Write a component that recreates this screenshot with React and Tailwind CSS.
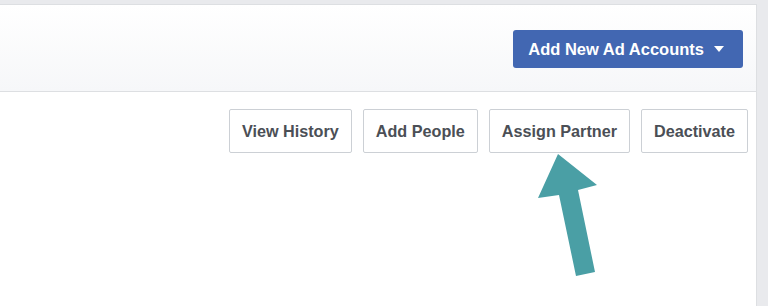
import React from 'react';

const actions = ['View History', 'Add People', 'Assign Partner', 'Deactivate'];

const App = () => {
  return (
    <div
      className="relative h-[306px] w-[768px] overflow-hidden bg-[#e9eaed] pt-[4px] pr-[11px]"
      style={{ fontFamily: '"Liberation Sans", Arial, sans-serif' }}
    >
      <div className="h-full border-t border-r border-[#dddfe2] bg-white">
        <div className="flex h-[87px] items-start justify-end border-b border-[#dddfe2] bg-gradient-to-b from-white to-[#f6f7f9] pt-[25px] pr-[13px]">
          <button className="flex h-[38px] items-center gap-[10px] rounded-[3px] bg-[#4267b2] pl-[15px] pr-[19px] text-[16.5px] font-bold text-white">
            Add New Ad Accounts
            <svg width="10" height="6" viewBox="0 0 10 6">
              <path d="M0 0 L10 0 L5 6 Z" fill="#fff" />
            </svg>
          </button>
        </div>

        <div className="flex justify-end gap-[11px] pt-[17px] pr-[8px]">
          {actions.map((label) => (
            <button
              key={label}
              className="h-[44px] rounded-[2px] border border-[#ccd0d5] bg-white px-[12px] text-[16.2px] font-bold text-[#4b4f56]"
            >
              {label}
            </button>
          ))}
        </div>
      </div>

      {/* annotation arrow */}
      <svg className="absolute left-0 top-0" width="768" height="306" viewBox="0 0 768 306">
        <polygon
          points="558,154 597,185 578,190 595,272 576,276 559,195 538,198"
          fill="#4a9fa5"
        />
      </svg>
    </div>
  );
};

export default App;
